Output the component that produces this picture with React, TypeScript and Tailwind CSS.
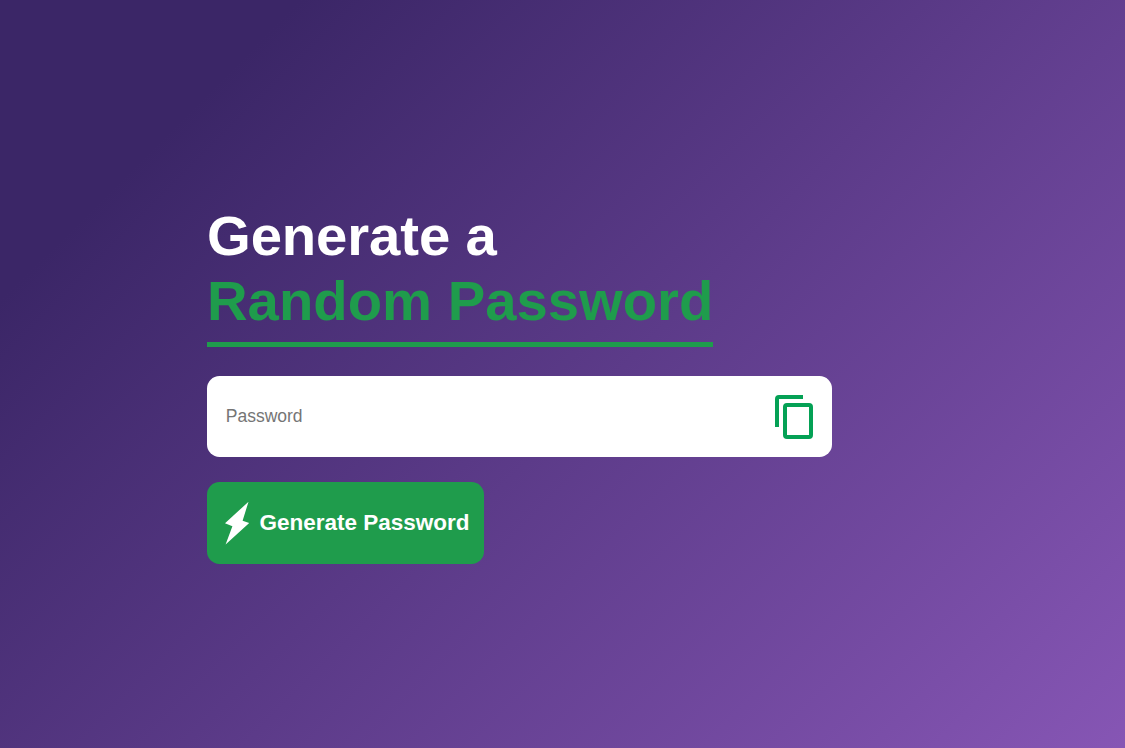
export default function App() {
  return (
    <main className="flex h-screen w-full flex-col items-start overflow-hidden bg-[linear-gradient(135deg,#3b2667_212px,#bc78ec_2121px)] pt-[203px] pl-[207px] font-['Liberation_Sans',Arial,sans-serif]">
      <h1 className="flex flex-col items-start text-[56.25px] leading-[65px] font-bold text-white">
        <span className="tracking-[-0.1px]">Generate a</span>
        <span className="h-[79px] border-b-[5px] border-[#1f9c4c] text-[#1f9c4c]">Random Password</span>
      </h1>
      <div className="mt-[29px] flex h-[81px] w-[625px] items-center justify-between rounded-[12.5px] bg-white pr-[19px] pl-[18.75px]">
        <input
          type="text"
          placeholder="Password"
          className="mb-[2px] h-5 min-w-0 flex-1 bg-transparent text-[17.5px] leading-5 text-[#333] outline-none placeholder:text-[#757575]"
        />
        <svg className="h-[45px] w-[40px]" viewBox="0 0 40 45" fill="none" stroke="#04a155" strokeWidth="4">
          <path d="M4 33V5a2 2 0 0 1 2-2h24" />
          <rect x="12" y="11" width="26" height="32" rx="2" />
        </svg>
      </div>
      <button className="mt-[25px] flex h-[82px] w-[277px] items-center rounded-[12.5px] bg-[#1f9c4c] pl-[17px] text-[22.5px] font-bold whitespace-nowrap text-white">
        <svg className="h-[44px] w-[26px]" viewBox="0 0 26 44" fill="currentColor">
          <path d="M24.5 .7 1 22.3l7.4 3L1.6 43.5 25.2 22l-6.6-2.2Z" />
        </svg>
        <span className="ml-[9.5px]">Generate Password</span>
      </button>
    </main>
  );
}
